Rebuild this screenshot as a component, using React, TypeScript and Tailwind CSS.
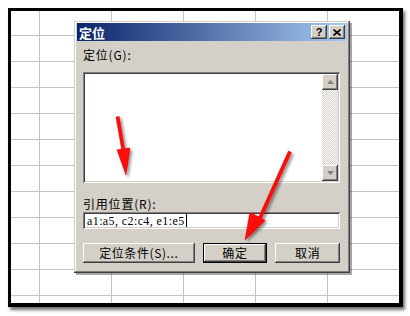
import React from 'react';

const cjk = "font-['Noto_Sans_CJK_SC','Noto_Sans',sans-serif]";

const raised =
  'bg-[#d4d0c8] shadow-[inset_-1px_-1px_#404040,inset_1px_1px_#ffffff,inset_-2px_-2px_#808080,inset_2px_2px_#d4d0c8]';
const sunken =
  'shadow-[inset_1px_1px_#808080,inset_-1px_-1px_#ffffff,inset_2px_2px_#404040,inset_-2px_-2px_#d4d0c8]';

function ScrollArrow({ dir }: { dir: 'up' | 'down' }) {
  return (
    <div className={`flex h-[16px] w-[16px] items-center justify-center ${raised}`}>
      <svg width="7" height="4" viewBox="0 0 7 4">
        {dir === 'up' ? (
          <path d="M3.5 0 L7 4 L0 4 Z" fill="#808080" />
        ) : (
          <path d="M0 0 L7 0 L3.5 4 Z" fill="#808080" />
        )}
      </svg>
    </div>
  );
}

function Button({
  label,
  width,
  isDefault,
}: {
  label: string;
  width: string;
  isDefault?: boolean;
}) {
  return (
    <div className={`${width} h-[20px] ${isDefault ? 'border border-black' : ''} flex`}>
      <div
        className={`flex-1 flex items-center justify-center text-[12px] leading-none tracking-[0.6px] text-black ${raised}`}
      >
        {label}
      </div>
    </div>
  );
}

function Arrows() {
  return (
    <svg
      className="absolute inset-0 pointer-events-none"
      width="410"
      height="316"
      viewBox="0 0 410 316"
    >
      <defs>
        <filter id="sh" x="-50%" y="-50%" width="200%" height="200%">
          <feDropShadow dx="2" dy="2" stdDeviation="1.6" floodColor="#000" floodOpacity="0.45" />
        </filter>
      </defs>
      <g filter="url(#sh)" fill="#ff0a0a" stroke="#e00000" strokeWidth="0.5">
        {/* arrow into the list box */}
        <path d="M116 117 L119.2 116.6 L124.6 148.6 L130 148 L126 175 L117 149.8 L121.6 149.3 Z" />
        {/* arrow onto 确定 */}
        <path d="M288.4 151 L291.4 152.6 L261.6 218.4 L265.2 220.4 L245 240 L249.8 212.6 L258.8 216.8 Z" />
      </g>
    </svg>
  );
}

export default function App() {
  return (
    <div className="relative w-[410px] h-[316px] bg-white overflow-hidden">
      <div className="pl-[8px] pt-[8px]">
        <div className="relative w-[395px] h-[299px] border-[3px] border-r-[4px] border-b-[4px] border-black bg-white shadow-[2px_3px_3px_rgba(0,0,0,0.55)] [background-image:linear-gradient(to_right,#c4c4c4_1px,transparent_1px),linear-gradient(to_bottom,#c4c4c4_1px,transparent_1px)] [background-size:72px_26px] [background-position:28px_24px]">
          {/* 定位 dialog */}
          <div
            className={`absolute left-[63px] top-[10px] w-[276px] h-[252px] flex flex-col px-[3px] pt-[2px] bg-[#d4d0c8] shadow-[inset_-1px_-1px_#404040,inset_1px_1px_#d4d0c8,inset_-2px_-2px_#808080,inset_2px_2px_#ffffff,2px_2px_0_rgba(0,0,0,0.35)] ${cjk}`}
          >
            <div className="h-[18px] flex items-center justify-between pl-[2px] pr-[2px] bg-[linear-gradient(to_right,#0a246a,#a6caf0)]">
              <span className="text-[13px] font-bold leading-none text-white">定位</span>
              <div className="flex gap-[2px]">
                <div className={`w-[16px] h-[14px] flex items-center justify-center ${raised}`}>
                  <span className="text-[11px] font-bold leading-none text-black font-['Liberation_Sans',sans-serif]">?</span>
                </div>
                <div className={`w-[16px] h-[14px] flex items-center justify-center ${raised}`}>
                  <svg width="8" height="7" viewBox="0 0 8 7">
                    <path d="M0.5 0.5 L7.5 6.5 M7.5 0.5 L0.5 6.5" stroke="#000" strokeWidth="1.6" />
                  </svg>
                </div>
              </div>
            </div>

            <div className="flex flex-col pl-[6px] pr-[7px]">
              <div className="mt-[7px] h-[14px] text-[12px] leading-[14px] tracking-[0.8px] text-black">定位(G):</div>

              <div className={`mt-[10px] h-[111px] bg-white flex justify-end p-[2px] ${sunken}`}>
                <div className="w-[16px] flex flex-col">
                  <ScrollArrow dir="up" />
                  <div className="flex-1 [background-image:repeating-conic-gradient(#d4d0c8_0_25%,#ffffff_0_50%)] [background-size:2px_2px]" />
                  <ScrollArrow dir="down" />
                </div>
              </div>

              <div className="mt-[14px] h-[14px] text-[12px] leading-[14px] tracking-[0.8px] text-black">引用位置(R):</div>

              <div className={`mt-[1px] h-[17px] bg-white flex items-center pl-[4px] ${sunken}`}>
                <span className="text-[12px] leading-none text-black font-['Liberation_Serif',serif] tracking-[0.4px]">
                  a1:a5, c2:c4, e1:e5
                </span>
                <span className="ml-[1px] w-[1px] h-[13px] bg-black" />
              </div>

              <div className="mt-[14px] flex gap-[8px]">
                <Button label="定位条件(S)..." width="w-[112px]" />
                <Button label="确定" width="w-[65px]" isDefault />
                <Button label="取消" width="w-[65px]" />
              </div>
            </div>
          </div>
        </div>
      </div>
      <Arrows />
    </div>
  );
}
